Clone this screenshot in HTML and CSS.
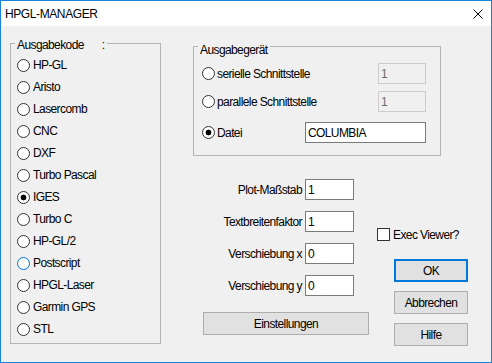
FILE: index.html
```html
<!DOCTYPE html>
<html lang="de">
<head>
    <meta charset="UTF-8">
    <title>HPGL-MANAGER</title>
    <link rel="stylesheet" href="styles.css">
</head>
<body>

<div class="window">
    <div class="titlebar">
        <span class="title">HPGL-MANAGER</span>
        <svg class="close" width="10" height="10" viewBox="0 0 10 10">
            <path d="M0.5 0.5 L9.5 9.5 M9.5 0.5 L0.5 9.5" stroke="#000" stroke-width="1" fill="none"/>
        </svg>
    </div>

    <div class="client">
        <div class="group codes">
            <div class="group-title">Ausgabekode<span class="gap"></span>:</div>
            <div class="radio-list">
                <label class="radio"><span class="circle"></span>HP-GL</label>
                <label class="radio"><span class="circle"></span>Aristo</label>
                <label class="radio"><span class="circle"></span>Lasercomb</label>
                <label class="radio"><span class="circle"></span>CNC</label>
                <label class="radio"><span class="circle"></span>DXF</label>
                <label class="radio"><span class="circle"></span>Turbo Pascal</label>
                <label class="radio"><span class="circle checked"></span>IGES</label>
                <label class="radio"><span class="circle"></span>Turbo C</label>
                <label class="radio"><span class="circle"></span>HP-GL/2</label>
                <label class="radio"><span class="circle hover"></span>Postscript</label>
                <label class="radio"><span class="circle"></span>HPGL-Laser</label>
                <label class="radio"><span class="circle"></span>Garmin GPS</label>
                <label class="radio"><span class="circle"></span>STL</label>
            </div>
        </div>

        <div class="right">
            <div class="group device">
                <div class="group-title">Ausgabegerät</div>
                <div class="device-row first">
                    <label class="radio"><span class="circle"></span>serielle Schnittstelle</label>
                    <input class="edit small" type="text" value="1" disabled>
                </div>
                <div class="device-row second">
                    <label class="radio"><span class="circle"></span>parallele Schnittstelle</label>
                    <input class="edit small" type="text" value="1" disabled>
                </div>
                <div class="device-row third">
                    <label class="radio"><span class="circle checked"></span>Datei</label>
                    <input class="edit wide" type="text" value="COLUMBIA">
                </div>
            </div>

            <div class="lower">
                <div class="fields">
                    <div class="field"><span class="field-label">Plot-Maßstab</span><input class="edit" type="text" value="1"></div>
                    <div class="field"><span class="field-label">Textbreitenfaktor</span><input class="edit" type="text" value="1"></div>
                    <div class="field"><span class="field-label">Verschiebung x</span><input class="edit" type="text" value="0"></div>
                    <div class="field"><span class="field-label">Verschiebung y</span><input class="edit" type="text" value="0"></div>
                    <button class="btn settings">Einstellungen</button>
                </div>

                <div class="side">
                    <label class="check"><span class="box"></span>Exec Viewer?</label>
                    <button class="btn default">OK</button>
                    <button class="btn">Abbrechen</button>
                    <button class="btn">Hilfe</button>
                </div>
            </div>
        </div>
    </div>
</div>

</body>
</html>
```

FILE: styles.css
```css
body {
    margin: 0;
    background-color: #f0f0f0;
}
.window {
    width: 492px;
    height: 363px;
    box-sizing: border-box;
    border: 1px solid #1883d7;
    background-color: #f0f0f0;
    font-family: "Liberation Sans", Arial, sans-serif;
    font-size: 12px;
    line-height: 14px;
    letter-spacing: -0.6px;
    color: #000;
}
.titlebar {
    height: 25px;
    background-color: #fff;
    display: flex;
    align-items: center;
    justify-content: space-between;
    padding: 0 8px 0 4px;
}
.title {
    letter-spacing: -0.4px;
}
.client {
    display: flex;
    padding: 17px 0 0 9px;
}
.group {
    border: 1px solid #b4b4b4;
    box-sizing: border-box;
}
.group-title {
    width: fit-content;
    padding: 0 2px;
    background-color: #f0f0f0;
}
.group-title .gap {
    display: inline-block;
    width: 18px;
}
.codes {
    width: 151px;
    height: 301px;
}
.codes .group-title {
    margin: -6px 0 0 4px;
}
.radio-list {
    margin-top: 2px;
}
.radio {
    display: flex;
    align-items: center;
    white-space: nowrap;
}
.radio-list .radio {
    height: 22px;
}
.circle {
    width: 13px;
    height: 13px;
    box-sizing: border-box;
    border: 1px solid #333;
    border-radius: 50%;
    background-color: #fff;
    margin: 0 3px 0 6px;
    flex: none;
}
.circle.checked {
    background: radial-gradient(circle, #000 0, #000 2.6px, #fff 3.2px);
}
.circle.hover {
    border-color: #0078d7;
}
.right {
    margin: 3px 0 0 32px;
}
.device {
    width: 248px;
    height: 110px;
}
.device .group-title {
    margin: -4px 0 0 4px;
}
.device-row {
    display: flex;
    align-items: center;
    justify-content: space-between;
    height: 21px;
    margin-right: 14px;
}
.device-row .circle {
    margin: 0 2px 0 8px;
}
.device-row.first {
    margin-top: 6px;
}
.device-row.second {
    margin-top: 7px;
}
.device-row.third {
    margin-top: 10px;
}
.edit {
    height: 21px;
    box-sizing: border-box;
    border: 1px solid #7a7a7a;
    background-color: #fff;
    padding: 0 2px;
    margin: 0;
    font: inherit;
    letter-spacing: inherit;
    color: #000;
    outline: none;
}
.edit:disabled {
    border-color: #cccccc;
    background-color: #f0f0f0;
    color: #6d6d6d;
}
.edit.small {
    width: 48px;
}
.edit.wide {
    width: 121px;
}
.lower {
    display: flex;
}
.fields {
    width: 176px;
    margin-top: 23px;
}
.field {
    display: grid;
    grid-template-columns: 109px 49px;
    column-gap: 3px;
    align-items: center;
    height: 21px;
    margin-bottom: 11px;
}
.field-label {
    text-align: right;
    white-space: nowrap;
}
.field .edit {
    width: 49px;
}
.btn {
    display: block;
    height: 23px;
    box-sizing: border-box;
    border: 1px solid #adadad;
    background-color: #e1e1e1;
    font: inherit;
    letter-spacing: inherit;
    color: #000;
    padding: 0;
    margin: 0;
}
.settings {
    width: 166px;
    margin: 16px 0 0 10px;
}
.side {
    margin-left: 8px;
    padding-top: 72px;
}
.check {
    display: flex;
    align-items: center;
    height: 13px;
    white-space: nowrap;
}
.box {
    width: 13px;
    height: 13px;
    box-sizing: border-box;
    border: 1px solid #333;
    background-color: #fff;
    margin-right: 3px;
}
.side .btn {
    width: 74px;
    margin: 9px 0 0 17px;
}
.side .btn.default {
    margin-top: 18px;
    border: 2px solid #0078d7;
}
```
